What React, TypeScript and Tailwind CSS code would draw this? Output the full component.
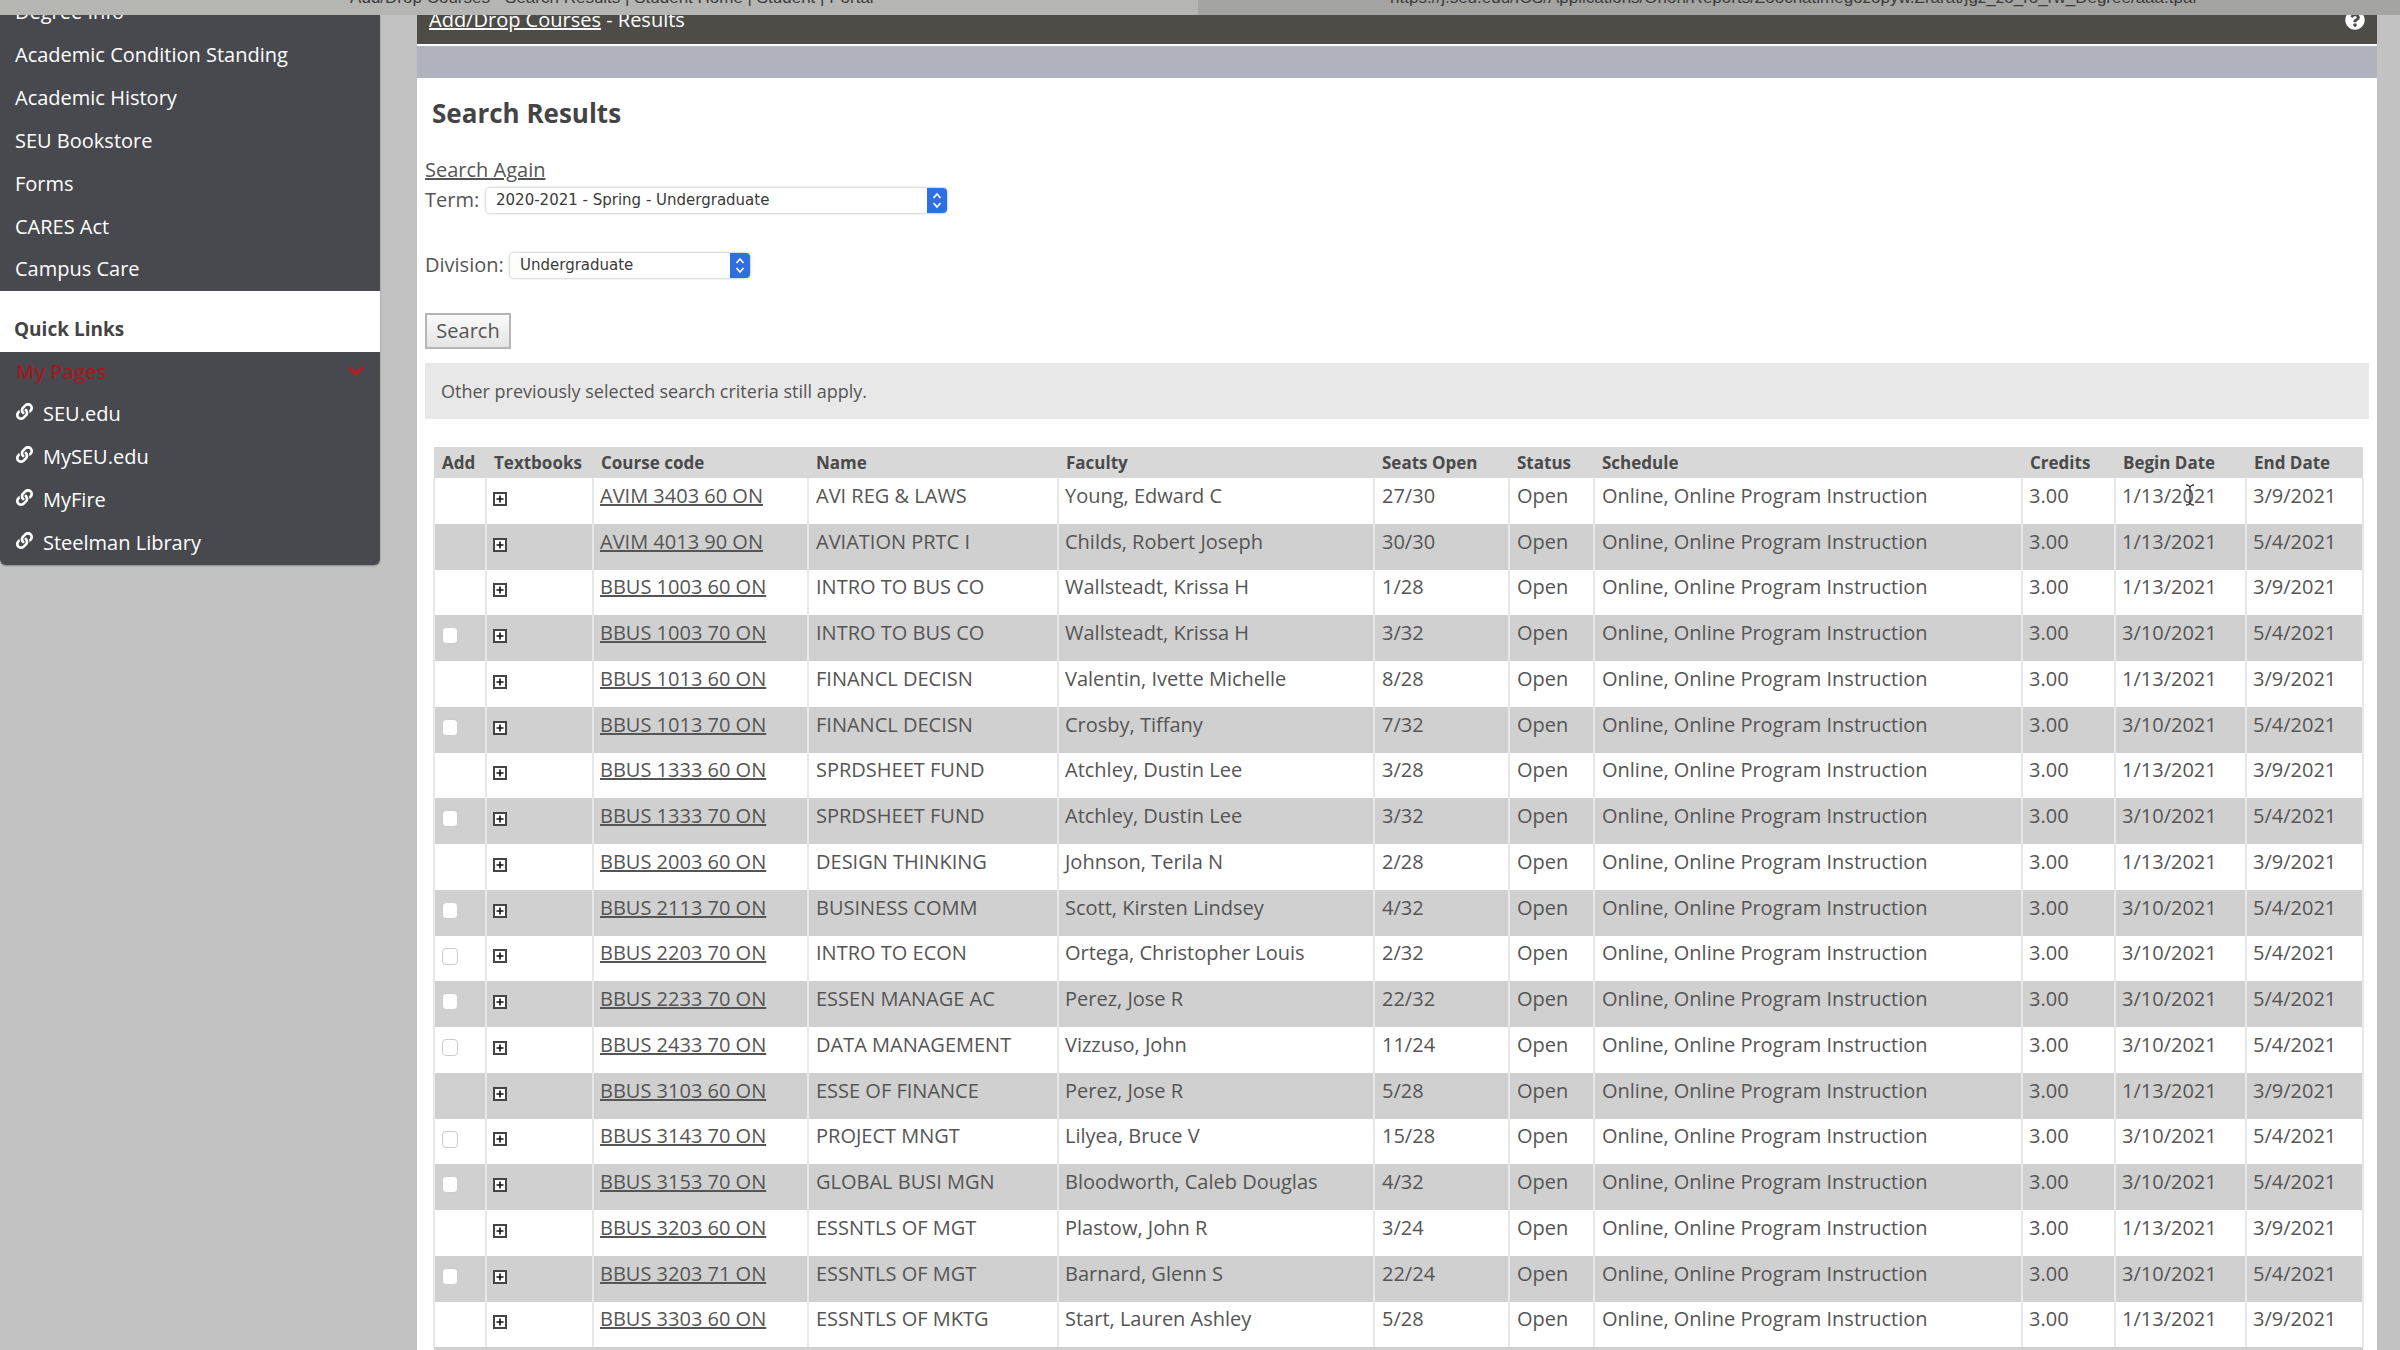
import React from 'react';
import { FaLink, FaChevronDown, FaQuestionCircle } from 'react-icons/fa';

const menuItems = ['Academic Condition Standing', 'Academic History', 'SEU Bookstore', 'Forms', 'CARES Act', 'Campus Care'];
const quickLinks = ['SEU.edu', 'MySEU.edu', 'MyFire', 'Steelman Library'];

const headers = ['Add', 'Textbooks', 'Course code', 'Name', 'Faculty', 'Seats Open', 'Status', 'Schedule', 'Credits', 'Begin Date', 'End Date'];

// last field: a = first half term, b = second half term, c = full term
type Course = [boolean, string, string, string, string, 'a' | 'b' | 'c'];

const courses: Course[] = [
    [false, 'AVIM 3403 60 ON', 'AVI REG & LAWS', 'Young, Edward C', '27/30', 'a'],
    [false, 'AVIM 4013 90 ON', 'AVIATION PRTC I', 'Childs, Robert Joseph', '30/30', 'c'],
    [false, 'BBUS 1003 60 ON', 'INTRO TO BUS CO', 'Wallsteadt, Krissa H', '1/28', 'a'],
    [true, 'BBUS 1003 70 ON', 'INTRO TO BUS CO', 'Wallsteadt, Krissa H', '3/32', 'b'],
    [false, 'BBUS 1013 60 ON', 'FINANCL DECISN', 'Valentin, Ivette Michelle', '8/28', 'a'],
    [true, 'BBUS 1013 70 ON', 'FINANCL DECISN', 'Crosby, Tiffany', '7/32', 'b'],
    [false, 'BBUS 1333 60 ON', 'SPRDSHEET FUND', 'Atchley, Dustin Lee', '3/28', 'a'],
    [true, 'BBUS 1333 70 ON', 'SPRDSHEET FUND', 'Atchley, Dustin Lee', '3/32', 'b'],
    [false, 'BBUS 2003 60 ON', 'DESIGN THINKING', 'Johnson, Terila N', '2/28', 'a'],
    [true, 'BBUS 2113 70 ON', 'BUSINESS COMM', 'Scott, Kirsten Lindsey', '4/32', 'b'],
    [true, 'BBUS 2203 70 ON', 'INTRO TO ECON', 'Ortega, Christopher Louis', '2/32', 'b'],
    [true, 'BBUS 2233 70 ON', 'ESSEN MANAGE AC', 'Perez, Jose R', '22/32', 'b'],
    [true, 'BBUS 2433 70 ON', 'DATA MANAGEMENT', 'Vizzuso, John', '11/24', 'b'],
    [false, 'BBUS 3103 60 ON', 'ESSE OF FINANCE', 'Perez, Jose R', '5/28', 'a'],
    [true, 'BBUS 3143 70 ON', 'PROJECT MNGT', 'Lilyea, Bruce V', '15/28', 'b'],
    [true, 'BBUS 3153 70 ON', 'GLOBAL BUSI MGN', 'Bloodworth, Caleb Douglas', '4/32', 'b'],
    [false, 'BBUS 3203 60 ON', 'ESSNTLS OF MGT', 'Plastow, John R', '3/24', 'a'],
    [true, 'BBUS 3203 71 ON', 'ESSNTLS OF MGT', 'Barnard, Glenn S', '22/24', 'b'],
    [false, 'BBUS 3303 60 ON', 'ESSNTLS OF MKTG', 'Start, Lauren Ashley', '5/28', 'a'],
];

const datesFor = (kind: string) => {
    if (kind === 'a') return ['1/13/2021', '3/9/2021'];
    if (kind === 'b') return ['3/10/2021', '5/4/2021'];
    return ['1/13/2021', '5/4/2021'];
};

const PlusBox = () => (
    <svg width="14" height="14" viewBox="0 0 14 14" fill="none" className="block">
        <rect x="1" y="1" width="12" height="12" fill="#fff" stroke="#444" strokeWidth="2" />
        <path d="M7 3.5 V10.5 M3.5 7 H10.5" stroke="#111" strokeWidth="1.6" />
    </svg>
);

const TextCursor = () => (
    <svg width="10" height="22" viewBox="0 0 10 22" fill="none" stroke="#333" strokeWidth="1.3" className="absolute left-[63px] top-[3px]">
        <path d="M1 1 C3 1 5 2 5 4 V18 C5 20 3 21 1 21 M9 1 C7 1 5 2 5 4 M5 18 C5 20 7 21 9 21" />
    </svg>
);

const SelectBox = ({ label, width }: { label: string; width: string }) => (
    <div className={`flex h-[25px] items-center justify-between rounded-[4px] bg-white pl-[10px] shadow-[0_0_2px_1px_#d4d4d4] ${width}`}>
        <span className="font-['DejaVu_Sans',sans-serif] text-[15px] text-[#3a3a3a]">{label}</span>
        <span className="flex h-[25px] w-[20px] items-center justify-center rounded-r-[4px] bg-[#2f6fe0]">
            <svg width="10" height="17" viewBox="0 0 10 17" fill="none" stroke="#fff" strokeWidth="1.6">
                <path d="M1.5 6 L5 2 L8.5 6" />
                <path d="M1.5 11 L5 15 L8.5 11" />
            </svg>
        </span>
    </div>
);

const App = () => {
    return (
        <div className="flex h-[1350px] w-[2400px] flex-col overflow-hidden bg-[#c2c2c2] font-['Open_Sans',sans-serif] text-[#555]">
            <div className="relative z-10 flex h-[15px] shrink-0 overflow-hidden font-['Liberation_Sans',sans-serif] text-[17px] leading-[8px] text-[#3c3c3c]">
                <div className="flex w-[1198px] bg-[#b5b5b3] pl-[330px]">
                    <span className="-mt-[6px] whitespace-nowrap">• &nbsp;&nbsp;Add/Drop Courses - Search Results | Student Home | Student | Portal</span>
                </div>
                <div className="flex flex-1 bg-[#a4a4a0] pl-[172px]">
                    <span className="-mt-[6px] whitespace-nowrap">• &nbsp;&nbsp;https://j.seu.edu/ICS/Applications/Orion/Reports/Zoocnatlmegozopyw.Zrarat/jgz_zo_ro_rw_Degree/aaa.tpar</span>
                </div>
            </div>

            <div className="flex min-h-0 flex-1">
                <aside className="w-[380px] shrink-0">
                    <div className="rounded-b-[6px] bg-[#48494e] shadow-[0_1px_2px_#888]">
                        <div className="h-[17px] overflow-hidden px-[15px] text-[20px] text-white">
                            <span className="block -translate-y-[13px] leading-[20px]">Degree Info</span>
                        </div>
                        <ul className="pt-[2px] text-[20px] text-white">
                            {menuItems.map((item) => (
                                <li key={item} className="flex h-[42.8px] items-center px-[15px]">{item}</li>
                            ))}
                        </ul>
                        <div className="h-[61px] bg-white px-[14px] pt-[25px] text-[19px] font-bold leading-[26px] text-[#444]">Quick Links</div>
                        <div className="flex h-[41px] items-center justify-between pl-[16px] pr-[15px] text-[20px] font-semibold text-[#9c1c24]">
                            <span>My Pages</span>
                            <FaChevronDown className="mb-[3px] size-[18px] text-[#c4161f]" />
                        </div>
                        <ul className="pb-[1px] text-[20px] text-white">
                            {quickLinks.map((link) => (
                                <li key={link} className="flex h-[42.8px] items-center pl-[16px]">
                                    <FaLink className="mb-[5px] mr-[10px] size-[17px]" />
                                    {link}
                                </li>
                            ))}
                        </ul>
                    </div>
                </aside>

                <main className="ml-[37px] w-[1960px] shrink-0 bg-white">
                    <div className="flex h-[31px] items-start justify-between overflow-hidden border-b-[2px] border-b-white bg-[#4d4c47] pl-[12px] pr-[12px] text-[20px] text-white">
                        <div className="-mt-[9px] leading-[28px]">
                            <span className="underline">Add/Drop Courses</span> - Results
                        </div>
                        <FaQuestionCircle className="-mt-[5px] size-[20px]" />
                    </div>
                    <div className="h-[32px] bg-[#b0b3bd]" />

                    <div className="pl-[8px] pr-[8px]">
                        <h1 className="ml-[7px] mt-[20px] text-[26px] font-bold leading-[30px] text-[#444]">Search Results</h1>
                        <a className="mt-[30px] block text-[20px] leading-[24px] text-[#555] underline">Search Again</a>
                        <div className="mt-[6px] flex items-center gap-[7px] text-[20px] leading-[25px]">
                            <span className="-mt-[3px] w-[54px]">Term:</span>
                            <SelectBox label="2020-2021 - Spring - Undergraduate" width="w-[461px]" />
                        </div>
                        <div className="mt-[40px] flex items-center gap-[7px] text-[20px] leading-[25px]">
                            <span className="-mt-[3px] w-[78px]">Division:</span>
                            <SelectBox label="Undergraduate" width="w-[240px]" />
                        </div>
                        <button className="mt-[35px] h-[36px] w-[86px] border-2 border-[#b5b5b5] bg-gradient-to-b from-[#fafafa] to-[#e4e4e4] text-[20px] text-[#555]">Search</button>
                        <div className="mt-[14px] flex h-[56px] items-center bg-[#e8e8e8] pl-[16px] text-[18px] text-[#555]">Other previously selected search criteria still apply.</div>

                        <table className="ml-[8px] mt-[28px] w-[1929px] table-fixed border-collapse text-[20px] text-[#555]">
                            <colgroup>
                                <col className="w-[52px]" />
                                <col className="w-[107px]" />
                                <col className="w-[215px]" />
                                <col className="w-[250px]" />
                                <col className="w-[316px]" />
                                <col className="w-[135px]" />
                                <col className="w-[85px]" />
                                <col className="w-[428px]" />
                                <col className="w-[93px]" />
                                <col className="w-[131px]" />
                                <col className="w-[117px]" />
                            </colgroup>
                            <thead>
                                <tr className="h-[31px] bg-[#d8d8d8] text-[17px]">
                                    {headers.map((h) => (
                                        <th key={h} className="whitespace-nowrap px-[8px] text-left font-bold text-[#4a4a4a]">{h}</th>
                                    ))}
                                </tr>
                            </thead>
                            <tbody>
                                {courses.map(([canAdd, code, name, faculty, seats, kind], i) => {
                                    const [begin, end] = datesFor(kind);
                                    return (
                                        <tr key={code} className={`h-[45.75px] ${i % 2 === 0 ? 'bg-white' : 'bg-[#d0d0d0]'}`}>
                                            <td className="border-x-2 border-[#e8e8e8] pl-[7px] align-top">
                                                {canAdd && <span className="mt-[12px] block h-[17px] w-[16px] rounded-[4px] border border-[#ccc] bg-white" />}
                                            </td>
                                            <td className="border-r-2 border-[#e8e8e8] pb-[4px] pl-[6px] align-middle">
                                                <PlusBox />
                                            </td>
                                            <td className="border-r-2 border-[#e8e8e8] px-[6px] pb-[10px] underline">{code}</td>
                                            <td className="border-r-2 border-[#e8e8e8] px-[7px] pb-[10px]">{name}</td>
                                            <td className="border-r-2 border-[#e8e8e8] px-[6px] pb-[10px]">{faculty}</td>
                                            <td className="border-r-2 border-[#e8e8e8] px-[7px] pb-[10px]">{seats}</td>
                                            <td className="border-r-2 border-[#e8e8e8] px-[7px] pb-[10px]">Open</td>
                                            <td className="border-r-2 border-[#e8e8e8] px-[7px] pb-[10px]">Online, Online Program Instruction</td>
                                            <td className="border-r-2 border-[#e8e8e8] px-[6px] pb-[10px]">3.00</td>
                                            <td className="border-r-2 border-[#e8e8e8] px-[6px] pb-[10px]">
                                                <span className="relative inline-block">
                                                    {begin}
                                                    {i === 0 && <TextCursor />}
                                                </span>
                                            </td>
                                            <td className="border-r-2 border-[#e8e8e8] px-[6px] pb-[10px]">{end}</td>
                                        </tr>
                                    );
                                })}
                                <tr className="h-[45.75px] bg-[#d0d0d0]"><td colSpan={11} /></tr>
                            </tbody>
                        </table>
                    </div>
                </main>
            </div>
        </div>
    );
};

export default App;
